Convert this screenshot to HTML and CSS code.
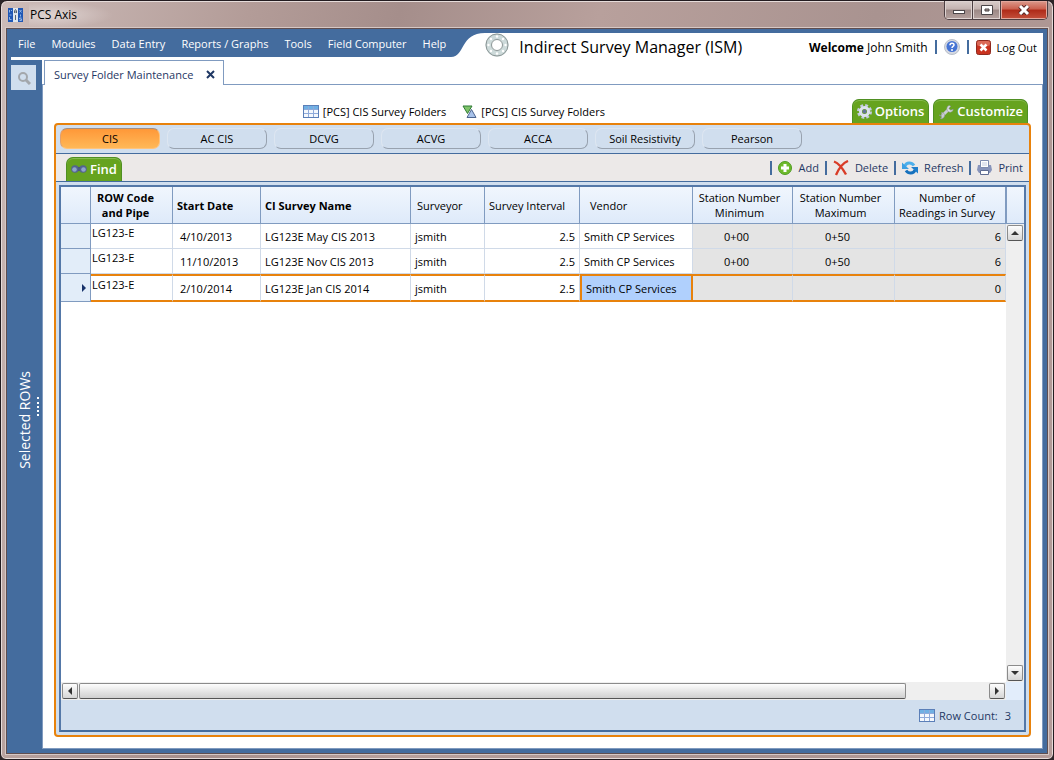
FILE: index.html
```html
<!DOCTYPE html>
<html lang="en">
<head>
    <meta charset="UTF-8">
    <meta name="viewport" content="width=device-width, initial-scale=1.0">
    <title>PCS Axis</title>
    <link rel="stylesheet" href="styles.css">
</head>
<body>
    <div class="window">
        <div class="titlebar">
            <svg class="app-icon" width="16" height="16" viewBox="0 0 16 16">
                <rect x="0" y="1" width="5" height="14" fill="#1f57b5"/>
                <rect x="5" y="1" width="5" height="14" fill="#dfe6ee"/>
                <rect x="10" y="1" width="5" height="14" fill="#1f57b5"/>
                <path d="M1.500 3v2.500M3.500 3v1M1.500 8h2M1.500 10v2.500h2M11.500 3l2 2.500M13.500 3l-2 2.500M12.500 7.500v2M13.500 11h-2v1h2v1.500h-2" stroke="#8fb4e6" fill="none"/>
                <path d="M6.500 6V4l1-1.500 1 1.500v2M6.500 5h2M7.500 8v5" stroke="#5a6673" fill="none"/>
            </svg>
            <span class="app-name">PCS Axis</span>
            <div class="window-buttons">
                <button class="win-btn" aria-label="Minimize">
                    <svg width="14" height="10" viewBox="0 0 14 10"><rect x="1.500" y="5.500" width="11" height="3" fill="#fff" stroke="#4b4649"/></svg>
                </button>
                <button class="win-btn" aria-label="Maximize">
                    <svg width="14" height="10" viewBox="0 0 14 10"><path d="M1.500.5h11v9h-11zM5 4v2h4V4z" fill="#fff" fill-rule="evenodd" stroke="#4b4649"/></svg>
                </button>
                <button class="win-btn win-close" aria-label="Close">
                    <svg width="14" height="10" viewBox="0 0 14 10"><path d="M3 1l8 8M11 1L3 9" stroke="#5b2a28" stroke-width="5"/><path d="M3 1l8 8M11 1L3 9" stroke="#fff" stroke-width="3"/></svg>
                </button>
            </div>
        </div>

        <div class="client">
            <header class="header">
                <nav class="menu">
                    <a href="#">File</a>
                    <a href="#">Modules</a>
                    <a href="#">Data Entry</a>
                    <a href="#">Reports / Graphs</a>
                    <a href="#">Tools</a>
                    <a href="#">Field Computer</a>
                    <a href="#">Help</a>
                </nav>
                <svg class="curve" width="34" height="24" viewBox="0 0 34 24"><path d="M0 24C14 24 9 0 34 0V24Z" fill="#fff"/></svg>
                <div class="module">
                    <svg width="24" height="24" viewBox="0 0 24 24">
                        <circle cx="12" cy="12" r="8.500" fill="none" stroke="#cddada" stroke-width="6"/>
                        <circle cx="12" cy="12" r="11" fill="none" stroke="#8c9696"/>
                        <circle cx="12" cy="12" r="5.500" fill="#fff" stroke="#8c9696"/>
                        <g fill="#fff"><circle cx="12" cy="3.500" r="1.200"/><circle cx="18" cy="6" r="1.200"/><circle cx="20.500" cy="12" r="1.200"/><circle cx="18" cy="18" r="1.200"/><circle cx="12" cy="20.500" r="1.200"/><circle cx="6" cy="18" r="1.200"/><circle cx="3.500" cy="12" r="1.200"/><circle cx="6" cy="6" r="1.200"/></g>
                    </svg>
                    <h1>Indirect Survey Manager (ISM)</h1>
                    <div class="user">
                        <span class="welcome"><b>Welcome</b> John Smith</span>
                        <i class="sep"></i>
                        <button class="plain" aria-label="Help">
                            <svg width="16" height="16" viewBox="0 0 16 16"><circle cx="8" cy="8" r="7.500" fill="#d5d9e2" stroke="#b9bfca"/><circle cx="8" cy="7.500" r="5.500" fill="#4674d4"/><path d="M6 6.200C6 3.600 10 3.700 10 6 10 7.500 8 7.300 8 9" fill="none" stroke="#fff" stroke-width="1.500"/><circle cx="8" cy="11" r="1" fill="#fff"/></svg>
                        </button>
                        <i class="sep"></i>
                        <a href="#" class="logout">
                            <svg width="15" height="15" viewBox="0 0 15 15"><rect x=".5" y=".5" width="14" height="14" rx="2" fill="#c9321f" stroke="#8f2a1f"/><rect x="1" y="1" width="13" height="5" rx="2" fill="#dc6a58"/><path d="M4.500 4.500l6 6M10.500 4.500l-6 6" stroke="#fff" stroke-width="2.500"/></svg>
                            Log Out
                        </a>
                    </div>
                </div>
            </header>

            <div class="workspace">
                <aside class="sidebar">
                    <button class="search" aria-label="Search">
                        <svg width="14" height="14" viewBox="0 0 14 14"><circle cx="6" cy="6" r="4" fill="none" stroke="#a3a7ac" stroke-width="2"/><path d="M9 9l4 4" stroke="#a3a7ac" stroke-width="3"/></svg>
                    </button>
                    <div class="rows-label">
                        <span>Selected ROWs</span>
                        <i class="grip"></i>
                    </div>
                </aside>

                <main class="page">
                    <div class="tabs">
                        <div class="tab">
                            <span>Survey Folder Maintenance</span>
                            <button class="plain" aria-label="Close tab">
                                <svg width="9" height="9" viewBox="0 0 9 9"><path d="M1 1l7 7M8 1L1 8" stroke="#1f3864" stroke-width="2"/></svg>
                            </button>
                        </div>
                    </div>

                    <div class="content">
                        <div class="views">
                            <div class="view-links">
                                <a href="#">
                                    <svg width="16" height="13" viewBox="0 0 16 13"><rect x=".5" y=".5" width="15" height="12" fill="#f4f8fd" stroke="#5b7fb8"/><rect x="1" y="1" width="14" height="3" fill="#6fb0e4"/><path d="M1 4.500h14M1 8.500h14M5.500 1v11M10.500 1v11" stroke="#8eaada"/></svg>
                                    [PCS] CIS Survey Folders
                                </a>
                                <a href="#">
                                    <svg width="15" height="13" viewBox="0 0 15 13"><path d="M1 1h9L5.500 8.500z" fill="#7fc46a" stroke="#2f7a35"/><path d="M9.500 4.500l4.500 8H5z" fill="#a8c2ea" stroke="#4c648f"/></svg>
                                    [PCS] CIS Survey Folders
                                </a>
                            </div>
                            <button class="green-tab">
                                <svg width="15" height="15" viewBox="0 0 15 15"><circle cx="7.500" cy="7.500" r="6" fill="none" stroke="#c3cbe0" stroke-width="3" stroke-dasharray="2.700 2.010"/><circle cx="7.500" cy="7.500" r="4" fill="none" stroke="#dde2ef" stroke-width="3"/><circle cx="7.500" cy="7.500" r="2" fill="#66759b"/></svg>
                                Options
                            </button>
                            <button class="green-tab">
                                <svg width="16" height="16" viewBox="0 0 16 16"><path d="M4 12l6.500-6.500" stroke="#c9cdd2" stroke-width="3"/><path d="M11 1.500a3.500 3.500 0 0 0 0 6.500c2 .5 4-.5 4.200-2.800l-2.400 1-2-1.800 2-2.200z" fill="#d9dde1" stroke="#8b9298" stroke-width=".6"/><path d="M1 11l2 .8 1-1-.5-2.300c2-.2 3.500 1.500 3 3.500-.5 2.300-2.500 3-4.200 2.500l1.400-1.300-.5-1z" fill="#c9cdd2" stroke="#8b9298" stroke-width=".6"/></svg>
                                Customize
                            </button>
                        </div>

                        <section class="panel">
                            <div class="pills">
                                <button class="pill active">CIS</button>
                                <button class="pill">AC CIS</button>
                                <button class="pill">DCVG</button>
                                <button class="pill">ACVG</button>
                                <button class="pill">ACCA</button>
                                <button class="pill">Soil Resistivity</button>
                                <button class="pill">Pearson</button>
                            </div>

                            <div class="toolbar">
                                <button class="green-tab find">
                                    <svg width="16" height="11" viewBox="0 0 16 11"><path d="M6 3h4v4H6z" fill="#434d63"/><circle cx="4" cy="5" r="3.800" fill="#53648f"/><circle cx="12" cy="5" r="3.800" fill="#53648f"/><circle cx="3.500" cy="5.500" r="2.300" fill="#8fa4cd"/><circle cx="12.500" cy="5.500" r="2.300" fill="#8fa4cd"/></svg>
                                    Find
                                </button>
                                <div class="actions">
                                    <i class="sep"></i>
                                    <button class="plain">
                                        <svg width="14" height="14" viewBox="0 0 14 14"><circle cx="7" cy="7" r="6.500" fill="#6fba2c" stroke="#4f9c22"/><path d="M7 3v8M3 7h8" stroke="#fff" stroke-width="3"/></svg>
                                        Add
                                    </button>
                                    <i class="sep"></i>
                                    <button class="plain">
                                        <svg width="16" height="16" viewBox="0 0 16 16"><path d="M1 1.500C5 3 10 9 13 14.500M15 1C10 3 6 8 3 15" fill="none" stroke="#d93c27" stroke-width="2.400"/></svg>
                                        Delete
                                    </button>
                                    <i class="sep"></i>
                                    <button class="plain">
                                        <svg width="16" height="14" viewBox="0 0 16 14"><path d="M3 5C4.500 1 9.500 1 12 4.500" fill="none" stroke="#4db0ec" stroke-width="3"/><path d="M0 1.500v6.500h7z" fill="#3da0e3"/><path d="M13 9C11.500 13 6.500 13 4 9.500" fill="none" stroke="#1671bd" stroke-width="3"/><path d="M16 12.500V6H9z" fill="#1f7fcc"/></svg>
                                        Refresh
                                    </button>
                                    <i class="sep"></i>
                                    <button class="plain">
                                        <svg width="15" height="15" viewBox="0 0 15 15"><path d="M1 5h2v2h9V5h2l1 5-2 3H2l-2-3z" fill="#8794bb"/><path d="M3.500.5h8v7h-8z" fill="#fff" stroke="#7e8cb0"/><path d="M5 3h5M5 5h5" stroke="#c4cce0"/><path d="M3.500 10.500h8v4h-8z" fill="#fff" stroke="#5f6d92"/></svg>
                                        Print
                                    </button>
                                </div>
                            </div>

                            <div class="grid">
                                <div class="grid-main">
                                    <div class="grid-body">
                                        <table>
                                            <colgroup>
                                                <col class="c-mark">
                                                <col class="c-row">
                                                <col class="c-date">
                                                <col>
                                                <col class="c-surveyor">
                                                <col class="c-interval">
                                                <col class="c-vendor">
                                                <col class="c-min">
                                                <col class="c-max">
                                                <col class="c-count">
                                            </colgroup>
                                            <thead>
                                                <tr>
                                                    <th></th>
                                                    <th class="bold center row-code">ROW Code<br>and Pipe</th>
                                                    <th class="bold">Start Date</th>
                                                    <th class="bold">CI Survey Name</th>
                                                    <th class="inset">Surveyor</th>
                                                    <th>Survey Interval</th>
                                                    <th class="inset-more">Vendor</th>
                                                    <th class="center number">Station Number<br>Minimum</th>
                                                    <th class="center number">Station Number<br>Maximum</th>
                                                    <th class="center number">Number of<br>Readings in Survey</th>
                                                </tr>
                                            </thead>
                                            <tbody>
                                                <tr>
                                                    <td class="mark"></td>
                                                    <td class="code">LG123-E</td>
                                                    <td class="date">4/10/2013</td>
                                                    <td>LG123E May CIS 2013</td>
                                                    <td>jsmith</td>
                                                    <td class="num">2.5</td>
                                                    <td>Smith CP Services</td>
                                                    <td class="calc station">0+00</td>
                                                    <td class="calc station">0+50</td>
                                                    <td class="calc num">6</td>
                                                </tr>
                                                <tr>
                                                    <td class="mark"></td>
                                                    <td class="code">LG123-E</td>
                                                    <td class="date">11/10/2013</td>
                                                    <td>LG123E Nov CIS 2013</td>
                                                    <td>jsmith</td>
                                                    <td class="num">2.5</td>
                                                    <td>Smith CP Services</td>
                                                    <td class="calc station">0+00</td>
                                                    <td class="calc station">0+50</td>
                                                    <td class="calc num">6</td>
                                                </tr>
                                                <tr class="current">
                                                    <td class="mark"><svg width="4" height="8" viewBox="0 0 4 8"><path d="M0 0l4 4-4 4z" fill="#17336b"/></svg></td>
                                                    <td class="code">LG123-E</td>
                                                    <td class="date">2/10/2014</td>
                                                    <td>LG123E Jan CIS 2014</td>
                                                    <td>jsmith</td>
                                                    <td class="num">2.5</td>
                                                    <td class="selected">Smith CP Services</td>
                                                    <td class="calc station"></td>
                                                    <td class="calc station"></td>
                                                    <td class="calc num">0</td>
                                                </tr>
                                            </tbody>
                                        </table>
                                    </div>
                                    <div class="vscroll">
                                        <div class="vscroll-head"></div>
                                        <button class="scroll-btn" aria-label="Scroll up"><svg width="8" height="4" viewBox="0 0 8 4"><path d="M0 4l4-4 4 4z" fill="#333"/></svg></button>
                                        <button class="scroll-btn" aria-label="Scroll down"><svg width="8" height="4" viewBox="0 0 8 4"><path d="M0 0h8L4 4z" fill="#333"/></svg></button>
                                    </div>
                                </div>
                                <div class="hscroll">
                                    <div class="hscroll-track">
                                        <button class="scroll-btn" aria-label="Scroll left"><svg width="4" height="8" viewBox="0 0 4 8"><path d="M4 0v8L0 4z" fill="#333"/></svg></button>
                                        <div class="thumb-area"><div class="thumb"></div></div>
                                        <button class="scroll-btn" aria-label="Scroll right"><svg width="4" height="8" viewBox="0 0 4 8"><path d="M0 0v8l4-4z" fill="#333"/></svg></button>
                                    </div>
                                </div>
                                <div class="grid-footer">
                                    <svg width="16" height="13" viewBox="0 0 16 13"><rect x=".5" y=".5" width="15" height="12" fill="#f4f8fd" stroke="#5b7fb8"/><rect x="1" y="1" width="14" height="3" fill="#6fb0e4"/><path d="M1 4.500h14M1 8.500h14M5.500 1v11M10.500 1v11" stroke="#8eaada"/></svg>
                                    <span>Row Count:</span>
                                    <span class="count">3</span>
                                </div>
                            </div>
                        </section>
                    </div>
                </main>
            </div>
        </div>
    </div>
</body>
</html>
```
FILE: styles.css
```css
* {
    box-sizing: border-box;
}

body {
    margin: 0;
    background: #2b2528;
    font-family: "Open Sans", "Noto Sans", sans-serif;
    font-size: 11px;
    line-height: 15px;
    color: #000;
}

button {
    font: inherit;
    color: inherit;
    padding: 0;
    margin: 0;
    cursor: pointer;
}

a {
    color: inherit;
    text-decoration: none;
}

svg {
    display: block;
    flex: none;
}

.plain {
    display: flex;
    align-items: center;
    gap: 6px;
    background: none;
    border: none;
}

.sep {
    width: 2px;
    height: 14px;
    background: #446c9e;
}

/* window frame */
.window {
    display: flex;
    flex-direction: column;
    min-height: 100vh;
    padding: 0 5px 5px;
    border: 1px solid #231c20;
    border-radius: 7px 7px 6px 6px;
    background: linear-gradient(105deg, #cdbcb9 0, #b39c98 20%, #a58e8b 32%, #b8a09c 48%, #a99390 70%, #b59c99 100%);
    box-shadow: inset 0 0 0 1px #e6dcda;
}

.titlebar {
    display: flex;
    align-items: center;
    height: 27px;
    padding-left: 2px;
    gap: 5px;
}

.app-name {
    padding: 0 1px;
    flex: 1;
    font-size: 12px;
    line-height: 26px;
    background: radial-gradient(ellipse 60px 13px at 24px 13px, rgba(255, 255, 255, 0.4), rgba(255, 255, 255, 0));
}

.window-buttons {
    display: flex;
    align-self: flex-start;
    border: 1px solid #4d3f42;
    border-top: none;
    border-radius: 0 0 5px 5px;
    overflow: hidden;
}

.win-btn {
    display: flex;
    align-items: center;
    justify-content: center;
    width: 28px;
    height: 18px;
    border: none;
    border-right: 1px solid #4d3f42;
    background: linear-gradient(#d9cdcb, #c3b2af 45%, #9c8885 50%, #b5a29f);
    box-shadow: inset 0 0 0 1px #ded3d1;
}

.win-close {
    width: 46px;
    border-right: none;
    background: linear-gradient(#dc9a8c, #cb5f4d 45%, #ae2a18 50%, #c4503c);
    box-shadow: inset 0 0 0 1px #e3a79c;
}

.client {
    flex: 1;
    display: flex;
    flex-direction: column;
    border: 1px solid #5f4e50;
    background: #446c9e;
    padding: 0 4px 4px 0;
    box-shadow: 0 0 0 1px #d6c8c5;
}

/* header */
.header {
    display: flex;
    align-items: flex-end;
    height: 28px;
}

.menu {
    display: flex;
    align-self: center;
    gap: 16px;
    padding-left: 11px;
    color: #fff;
}

.curve {
    margin-left: 5px;
}

.module {
    flex: 1;
    display: flex;
    align-items: center;
    height: 24px;
    padding-right: 6px;
    background: #fff;
}

h1 {
    flex: 1;
    margin: 0 0 0 10px;
    padding-top: 4px;
    font-size: 16px;
    line-height: 20px;
    font-weight: 400;
}

.user {
    display: flex;
    align-items: center;
    gap: 7px;
    padding-top: 4px;
}

.welcome {
    font-size: 12px;
}

.logout {
    display: flex;
    align-items: center;
    gap: 6px;
}

/* workspace */
.workspace {
    flex: 1;
    display: flex;
    margin-left: 4px;
    border-top: 3px solid #fff;
}

.sidebar {
    display: flex;
    flex-direction: column;
    width: 31px;
    padding-top: 5px;
}

.search {
    display: flex;
    align-items: center;
    justify-content: center;
    width: 25px;
    height: 25px;
    border: none;
    background: #d0deee;
}

.rows-label {
    flex: 1;
    display: flex;
    align-items: center;
    gap: 3px;
    padding-left: 5px;
    color: #fff;
    font-size: 14px;
}

.rows-label span {
    writing-mode: vertical-rl;
    transform: rotate(180deg);
    line-height: 18px;
}

.grip {
    height: 19px;
    border-left: 2px dotted #fff;
    margin-bottom: 26px;
}

.page {
    flex: 1;
    display: flex;
    flex-direction: column;
    min-width: 0;
    background: #fff;
}

.tabs {
    display: flex;
    padding-left: 2px;
    border-bottom: 1px solid #809bc0;
}

.tab {
    display: flex;
    align-items: center;
    gap: 13px;
    height: 25px;
    margin-bottom: -1px;
    padding: 2px 8px 0 9px;
    border: 1px solid #809bc0;
    border-bottom: none;
    background: #fff;
    color: #1f3864;
}

.content {
    flex: 1;
    display: flex;
    flex-direction: column;
    border: 1px solid #809bc0;
    border-top: none;
    padding: 14px 11px 11px;
}

.views {
    display: flex;
    gap: 4px;
    padding-right: 3px;
}

.view-links {
    flex: 1;
    display: flex;
    align-items: center;
    justify-content: center;
    gap: 16px;
    padding-left: 6px;
}

.view-links a {
    display: flex;
    align-items: center;
    gap: 4px;
}

.green-tab {
    display: flex;
    align-items: center;
    gap: 3px;
    height: 24px;
    padding: 0 4px;
    border: 1px solid #4f8f22;
    border-bottom: none;
    border-radius: 7px 7px 0 0;
    background: #66a31f;
    box-shadow: inset 0 1px 0 #86bb4c;
    color: #fff;
    font-size: 13px;
    font-weight: 600;
}

/* panel */
.panel {
    flex: 1;
    display: flex;
    flex-direction: column;
    border: 2px solid #e8820c;
    border-radius: 4px;
    background: #d0deee;
}

.pills {
    display: flex;
    gap: 7px;
    padding: 3px 4px 4px;
    border-bottom: 1px solid #446c9e;
}

.pill {
    width: 100px;
    height: 21px;
    border: 1px solid;
    border-color: #dde6f1 #98a2af #98a2af #dde6f1;
    border-radius: 7px;
    background: #d0deee;
}

.pill.active {
    border-color: #a68f80 #ffc37c #ffc37c #e0a070;
    background: linear-gradient(#ff9838, #ffb858);
}

.toolbar {
    display: flex;
    align-items: flex-end;
    justify-content: space-between;
    height: 28px;
    padding: 0 6px 0 10px;
    border-bottom: 1px solid #446c9e;
    background: #ece9e8;
}

.actions {
    display: flex;
    align-items: center;
    align-self: center;
    gap: 6px;
    color: #1f3864;
}

/* grid */
.grid {
    flex: 1;
    display: flex;
    flex-direction: column;
    margin: 3px;
    border: 2px solid #5478a8;
    border-bottom-color: #446c9e;
}

.grid-main {
    flex: 1;
    display: flex;
    background: #fff;
}

.grid-body {
    flex: 1;
    min-width: 0;
}

table {
    width: 100%;
    table-layout: fixed;
    border-collapse: separate;
    border-spacing: 0;
}

.c-mark { width: 30px; }
.c-row { width: 82px; }
.c-date { width: 88px; }
.c-surveyor { width: 74px; }
.c-interval { width: 95px; }
.c-vendor { width: 113px; }
.c-min { width: 100px; }
.c-max { width: 102px; }
.c-count { width: 111px; }

th {
    height: 37px;
    padding: 0 4px;
    border-right: 1px solid #809bc0;
    border-bottom: 1px solid #809bc0;
    background: linear-gradient(#f0f6fd, #deeafa);
    font-weight: 400;
    text-align: left;
    white-space: nowrap;
}

th.bold {
    font-weight: 700;
}

th.center {
    padding: 0;
    text-align: center;
}

th.row-code {
    padding-right: 12px;
}

th.number {
    padding-right: 6px;
}

th.inset {
    padding-left: 6px;
}

th.inset-more {
    padding-left: 10px;
}

td {
    height: 25px;
    padding: 1px 4px 0;
    border-right: 1px solid #d0dae8;
    border-bottom: 1px solid #d0dae8;
    white-space: nowrap;
}

td.mark {
    padding: 0 4px 0 0;
    border-color: #809bc0;
    background: #e2edf9;
}

td.mark svg {
    margin-left: auto;
}

td.code {
    padding: 1px 1px 0;
    vertical-align: top;
}

td.date {
    padding-left: 7px;
}

td.num {
    text-align: right;
}

td.calc {
    background: #e4e4e4;
}

td.station {
    padding-right: 16px;
    text-align: center;
}

.current td {
    height: 28px;
    border-top: 2px solid #e8820c;
    border-bottom: 2px solid #e8820c;
}

.current td.mark {
    border-top: none;
    border-bottom: 1px solid #809bc0;
}

.current td.selected {
    border-left: 2px solid #e8820c;
    border-right: 2px solid #e8820c;
    background: #b0d0fd;
}

/* scroll bars */
.vscroll {
    display: flex;
    flex-direction: column;
    align-items: center;
    width: 18px;
    padding-bottom: 1px;
    background: #efefef;
}

.vscroll-head {
    width: 100%;
    height: 37px;
    border-left: 1px solid #809bc0;
    border-bottom: 1px solid #809bc0;
    background: linear-gradient(#f0f6fd, #deeafa);
}

.vscroll .scroll-btn:last-child {
    margin-top: auto;
}

.scroll-btn {
    display: flex;
    flex: none;
    align-items: center;
    justify-content: center;
    width: 16px;
    height: 16px;
    border: 1px solid #8b8b8b;
    border-bottom-color: #555;
    border-radius: 2px;
    background: linear-gradient(#fdfdfd, #d6d6d6);
}

.vscroll .scroll-btn {
    margin-top: 1px;
}

.hscroll {
    padding-right: 18px;
    background: #e2edfb;
}

.hscroll-track {
    display: flex;
    gap: 1px;
    padding: 1px;
    background: #efefef;
}

.thumb-area {
    flex: 1;
}

.thumb {
    width: 91%;
    height: 16px;
    border: 1px solid #8b8b8b;
    border-bottom-color: #555;
    border-radius: 2px;
    background: linear-gradient(#fdfdfd, #d0d0d0);
}

.grid-footer {
    display: flex;
    align-items: center;
    justify-content: flex-end;
    gap: 4px;
    height: 30px;
    padding-right: 13px;
    background: #d0deee;
    color: #1f3864;
}

.count {
    padding-left: 3px;
}
```
